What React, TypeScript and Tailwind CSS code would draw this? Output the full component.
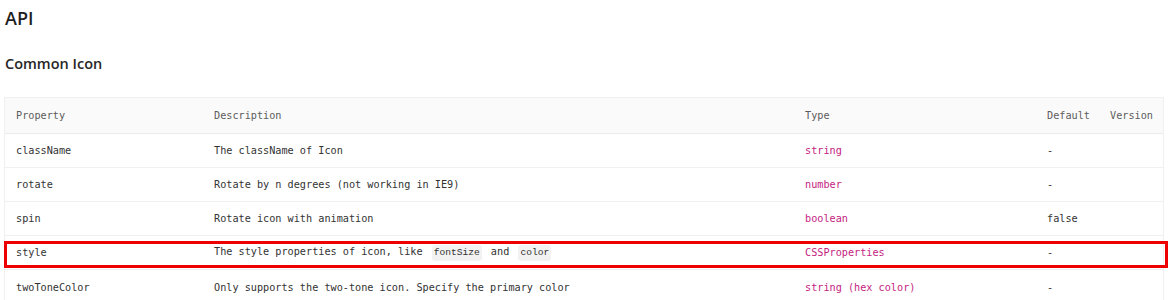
import React from "react";

const mono = "font-['DejaVu_Sans_Mono','Liberation_Mono',monospace]";

type Row = { p: string; d: React.ReactNode; t: string; def: string; v: string; hl?: boolean };

const Code = ({ children }: { children: React.ReactNode }) => (
  <code className="mx-[3px] inline-block rounded-[3px] bg-[#f2f2f2] px-[2px] py-[2px] leading-[12px] text-[9.6px] text-[#333]">
    {children}
  </code>
);

const rows: Row[] = [
  { p: "className", d: "The className of Icon", t: "string", def: "-", v: "" },
  { p: "rotate", d: "Rotate by n degrees (not working in IE9)", t: "number", def: "-", v: "" },
  { p: "spin", d: "Rotate icon with animation", t: "boolean", def: "false", v: "" },
  {
    p: "style",
    d: (
      <>
        The style properties of icon, like <Code>fontSize</Code> and <Code>color</Code>
      </>
    ),
    t: "CSSProperties",
    def: "-",
    v: "",
    hl: true,
  },
  { p: "twoToneColor", d: "Only supports the two-tone icon. Specify the primary color", t: "string (hex color)", def: "-", v: "" },
];

const cols = "grid grid-cols-[198px_591px_242px_63px_1fr]";

export default function App() {
  return (
    <div className="w-[1168px] h-[300px] overflow-hidden bg-white font-['Open_Sans','Noto_Sans',sans-serif]">
      <div className="pl-[5px] pt-[5px]">
        <h2 className="text-[18px] leading-[26px] font-semibold text-[#1f1f1f]">API</h2>
        <h3 className="mt-[23px] text-[14.5px] leading-[20px] font-semibold text-[#262626]">Common Icon</h3>
      </div>
      <div className={`mt-[23px] ml-[4px] w-[1160px] border-l border-r border-t border-[#f0f0f0] ${mono} text-[10.2px]`}>
        <div className={`${cols} h-[36px] items-center bg-[#fafafa] border-b border-[#ececec] text-[#5c5c5c]`}>
          <div className="pl-[11px]">Property</div>
          <div className="pl-[11px]">Description</div>
          <div className="pl-[11px]">Type</div>
          <div className="pl-[11px]">Default</div>
          <div className="pl-[11px]">Version</div>
        </div>
        {rows.map((r, i) => (
          <div
            key={r.p}
            className={`${cols} relative ${i === 4 ? "h-[36px]" : "h-[34px]"} items-center border-b border-[#f0f0f0] text-[#333]`}
          >
            <div className="pl-[11px]">{r.p}</div>
            <div className="pl-[11px] whitespace-nowrap">{r.d}</div>
            <div className="pl-[11px] text-[#c41d7f]">{r.t}</div>
            <div className="pl-[11px]">{r.def}</div>
            <div className="pl-[11px]">{r.v}</div>
            {r.hl && (
              <div className="absolute left-[-1px] right-[-5px] top-[5px] bottom-[1px] border-[3px] border-[#ee0000]" />
            )}
          </div>
        ))}
      </div>
    </div>
  );
}
